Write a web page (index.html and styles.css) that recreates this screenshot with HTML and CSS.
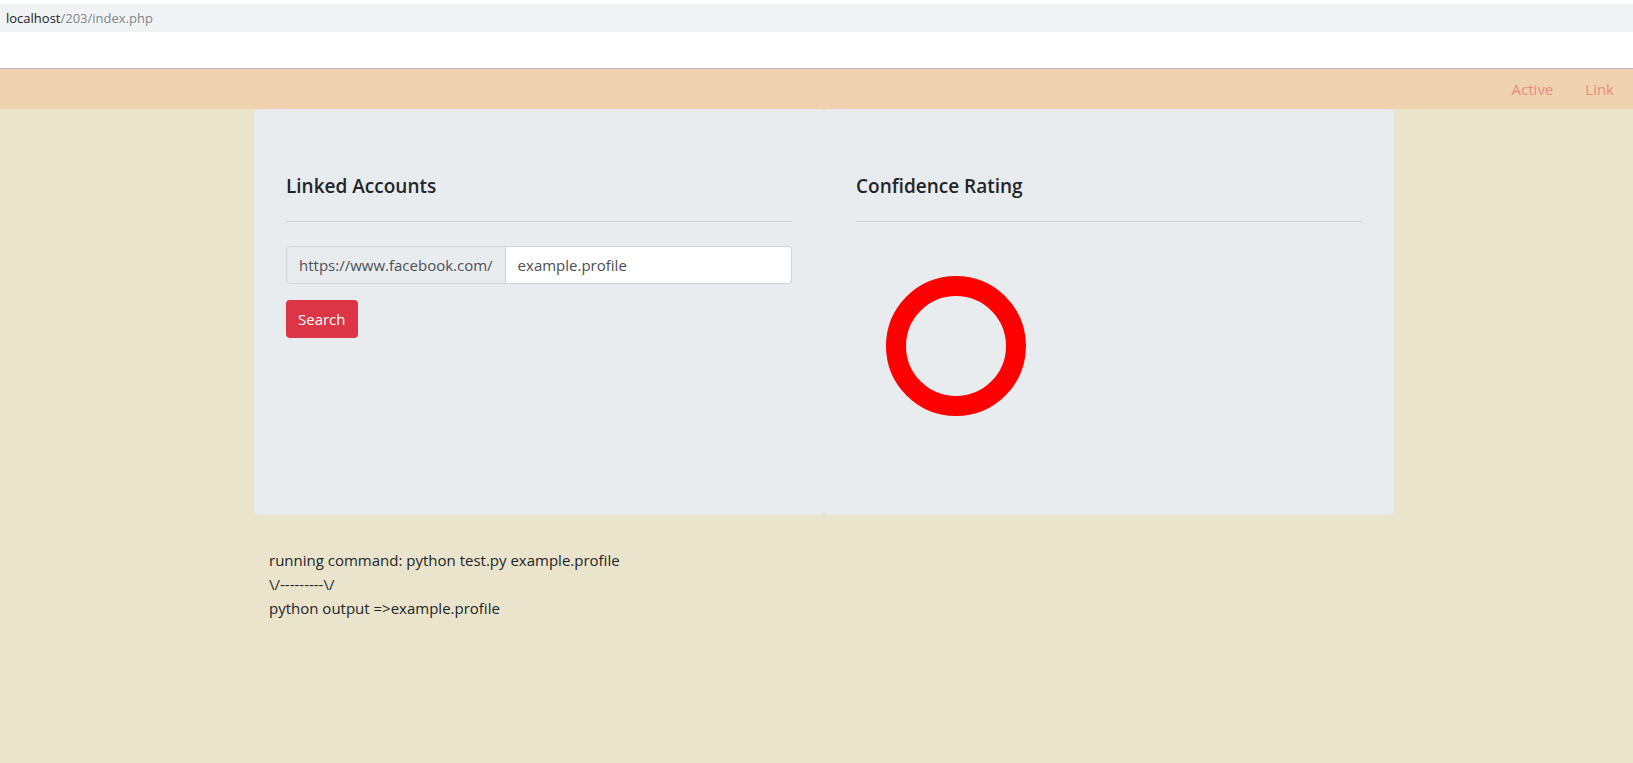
FILE: index.html
```html
<!DOCTYPE html>
<html lang="en">
<head>
<meta charset="utf-8">
<title>index.php</title>
<link rel="stylesheet" href="styles.css">
</head>
<body>
<header class="browser">
  <div class="urlbar"><span class="host">localhost</span><span class="path">/203/index.php</span></div>
  <div class="toolbar-space"></div>
</header>
<nav class="navbar">
  <a class="nav-link" href="#">Active</a>
  <a class="nav-link" href="#">Link</a>
</nav>
<main class="container">
  <div class="row">
    <section class="jumbo">
      <h5 class="title">Linked Accounts</h5>
      <hr class="rule">
      <div class="input-group">
        <span class="prepend">https://www.facebook.com/</span>
        <span class="field">example.profile</span>
      </div>
      <button class="btn-danger" type="button">Search</button>
    </section>
    <section class="jumbo">
      <h5 class="title">Confidence Rating</h5>
      <hr class="rule">
      <div class="ring"></div>
    </section>
  </div>
  <div class="output">
    <div class="line">running command: python test.py example.profile</div>
    <div class="line">\/---------\/</div>
    <div class="line">python output =&gt;example.profile</div>
  </div>
</main>
</body>
</html>
```

FILE: styles.css
```css
* { box-sizing: border-box; }
html, body { margin: 0; padding: 0; }
body {
  background: #ebe4cc;
  font-family: "Open Sans", "Noto Sans", sans-serif;
  color: #212529;
  font-size: 16px;
  line-height: 1.5;
  min-height: 763px;
}
.browser {
  background: #ffffff;
  padding-top: 4px;
}
.urlbar {
  height: 28px;
  background: #f1f3f4;
  padding-left: 6px;
  font-size: 13px;
  line-height: 28px;
}
.host { color: #202124; }
.path { color: #80868b; }
.toolbar-space {
  height: 37px;
  border-bottom: 1px solid #b9b9b9;
}
.navbar {
  height: 40px;
  background: #f0d2b0;
  display: flex;
  justify-content: flex-end;
  align-items: center;
  padding-right: 3px;
}
.nav-link {
  color: #e48c7d;
  text-decoration: none;
  padding: 0 16px;
  font-size: 15px;
}
.container {
  width: 1140px;
  margin-left: calc(50% - 562.5px);
}
.row {
  display: flex;
}
.jumbo {
  flex: 0 0 570px;
  height: 406px;
  background: #e9ecef;
  border-radius: 4.8px;
  padding: 64px 32px;
}
.title {
  margin: 0;
  padding-top: 1px;
  font-size: 19px;
  font-weight: 600;
  line-height: 24px;
  color: #212529;
}
.rule {
  margin: 23px 0 24px;
  border: 0;
  border-top: 1px solid rgba(0, 0, 0, 0.1);
}
.input-group {
  display: flex;
  height: 38px;
  margin-bottom: 16px;
  font-size: 15px;
  color: #495057;
}
.prepend {
  display: flex;
  align-items: center;
  padding: 0 12px;
  background: #e9ecef;
  border: 1px solid #ced4da;
  border-radius: 4px 0 0 4px;
  white-space: nowrap;
}
.field {
  flex: 1;
  display: flex;
  align-items: center;
  padding: 0 12px;
  background: #ffffff;
  border: 1px solid #ced4da;
  border-left: 0;
  border-radius: 0 4px 4px 0;
}
.btn-danger {
  display: block;
  height: 38px;
  padding: 0 12px;
  background: #dc3545;
  color: #ffffff;
  border: 0;
  border-radius: 4px;
  font-family: inherit;
  font-size: 15px;
}
.ring {
  width: 140px;
  height: 140px;
  border: 20px solid #ff0000;
  border-radius: 50%;
  margin: 54px 0 0 30px;
}
.output {
  padding: 33px 15px 0;
  font-size: 15px;
  line-height: 24px;
  color: #212529;
}
```
